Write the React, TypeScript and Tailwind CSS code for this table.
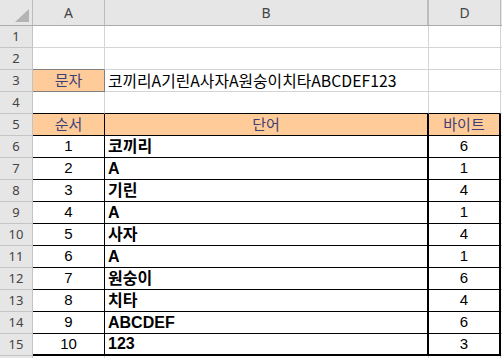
import type { ReactNode } from "react";

const KR = "font-['Liberation_Sans','Noto_Sans_CJK_KR',sans-serif]";
const MALGUN = "font-['Noto_Sans_CJK_KR',sans-serif]";
const HEAD = "font-['Noto_Sans','Noto_Sans_CJK_KR',sans-serif]";

const WORDS: [number, string, number][] = [
  [1, "코끼리", 6],
  [2, "A", 1],
  [3, "기린", 4],
  [4, "A", 1],
  [5, "사자", 4],
  [6, "A", 1],
  [7, "원숭이", 6],
  [8, "치타", 4],
  [9, "ABCDEF", 6],
  [10, "123", 3],
];

function RowHead({ n }: { n?: number }) {
  return (
    <div
      className={`flex w-[33px] shrink-0 items-center justify-center border-r border-b border-[#c4c4c4] bg-[#e6e6e6] text-[13px] text-[#444] ${HEAD}`}
    >
      {n}
    </div>
  );
}

function Row({ n, children }: { n?: number; children: ReactNode }) {
  return (
    <div className="flex h-[22px]">
      <RowHead n={n} />
      {children}
      <div className="flex-1 border-b border-[#d4d4d4]" />
    </div>
  );
}

function Blank({ w, extra = "" }: { w: string; extra?: string }) {
  return <div className={`${w} shrink-0 border-r border-b border-[#d4d4d4] ${extra}`} />;
}

export default function App() {
  return (
    <div className="h-[358px] w-[502px] overflow-hidden bg-white">
      {/* column headers */}
      <div className={`flex h-[26px] border-b border-[#ababab] bg-[#e6e6e6] text-[14px] text-[#444] ${HEAD}`}>
        <div className="relative w-[33px] shrink-0 border-r border-[#bcbcbc]">
          <svg className="absolute top-[9px] left-[15px]" width="14" height="13" viewBox="0 0 14 13">
            <polygon points="14,0 14,13 0,13" fill="#b4b4b4" />
          </svg>
        </div>
        <div className="flex w-[72px] shrink-0 items-center justify-center border-r border-[#bcbcbc]">A</div>
        <div className="flex w-[324px] shrink-0 items-center justify-center border-r-2 border-[#bcbcbc]">B</div>
        <div className="flex w-[72px] shrink-0 items-center justify-center border-r border-[#bcbcbc]">D</div>
        <div className="flex-1" />
      </div>

      <Row n={1}>
        <Blank w="w-[72px]" />
        <Blank w="w-[324px]" />
        <Blank w="w-[72px]" />
      </Row>
      <Row n={2}>
        <Blank w="w-[72px]" extra="border-b-[#7f7f7f]" />
        <Blank w="w-[324px]" />
        <Blank w="w-[72px]" />
      </Row>
      <Row n={3}>
        <div
          className={`flex w-[72px] shrink-0 items-center justify-center border-r border-b border-[#7f7f7f] bg-[#ffcc99] text-[15px] text-[#3f3f76] ${MALGUN}`}
        >
          문자
        </div>
        <div
          className={`flex w-[324px] shrink-0 items-center border-r border-b border-[#d4d4d4] pl-[3px] text-[15.8px] text-black ${MALGUN}`}
        >
          코끼리A기린A사자A원숭이치타ABCDEF123
        </div>
        <Blank w="w-[72px]" />
      </Row>
      <Row n={4}>
        <Blank w="w-[72px]" extra="border-b-black" />
        <Blank w="w-[324px]" extra="border-b-black" />
        <Blank w="w-[72px]" extra="border-b-black" />
      </Row>
      <Row n={5}>
        <div
          className={`flex w-[72px] shrink-0 items-center justify-center border-r border-b border-black bg-[#ffcc99] text-[15px] text-[#3f3f76] ${MALGUN}`}
        >
          순서
        </div>
        <div
          className={`flex w-[324px] shrink-0 items-center justify-center border-r-2 border-b border-black bg-[#ffcc99] text-[15px] text-[#3f3f76] ${MALGUN}`}
        >
          단어
        </div>
        <div
          className={`flex w-[72px] shrink-0 items-center justify-center border-r-2 border-b border-black bg-[#ffcc99] text-[15px] text-[#3f3f76] ${MALGUN}`}
        >
          바이트
        </div>
      </Row>
      {WORDS.map(([no, word, bytes], i) => {
        const bb = i === WORDS.length - 1 ? "border-b-2" : "border-b";
        return (
          <Row key={no} n={no + 5}>
            <div
              className={`flex w-[72px] shrink-0 items-center justify-center border-r ${bb} border-black text-[15px] text-black ${KR}`}
            >
              {no}
            </div>
            <div
              className={`flex w-[324px] shrink-0 items-center border-r-2 ${bb} border-black pl-[3px] text-[16px] font-bold text-black ${KR}`}
            >
              {word}
            </div>
            <div
              className={`flex w-[72px] shrink-0 items-center justify-center border-r-2 ${bb} border-black text-[15px] text-black ${KR}`}
            >
              {bytes}
            </div>
          </Row>
        );
      })}
      <Row>
        <Blank w="w-[72px]" />
        <Blank w="w-[324px]" />
        <Blank w="w-[72px]" />
      </Row>
    </div>
  );
}
